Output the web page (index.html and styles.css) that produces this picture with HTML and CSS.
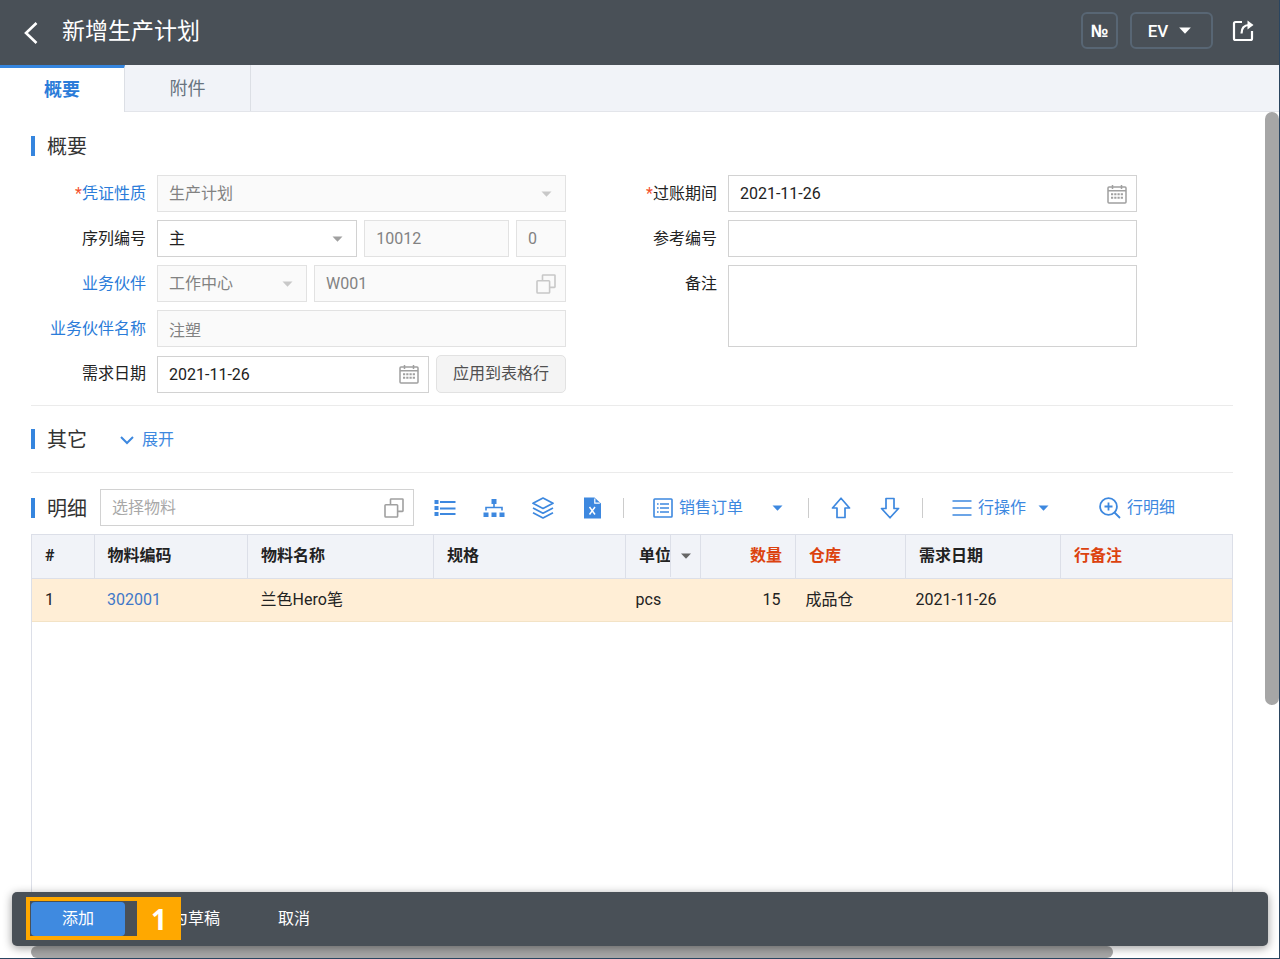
FILE: index.html
```html
<!DOCTYPE html>
<html lang="zh-CN">
<head>
<meta charset="utf-8">
<meta name="viewport" content="width=device-width, initial-scale=1">
<title>新增生产计划</title>
<link rel="stylesheet" href="styles.css">
</head>
<body>
<svg class="defs" width="0" height="0" aria-hidden="true">
  <symbol id="calendar" viewBox="0 0 20 20"><rect x="1" y="3" width="18" height="16" rx="1" fill="none" stroke="currentColor" stroke-width="1.5"/><path d="M1 6.7h18M5.5 1v4M14.5 1v4" fill="none" stroke="currentColor" stroke-width="1.5"/><path d="M4 10.3h12M4 13.8h12" stroke="currentColor" stroke-width="2" stroke-dasharray="2.2 1.05"/></symbol>
  <symbol id="lookup" viewBox="0 0 20 20"><path d="M6.5 6V1.6q0-.6.6-.6h11.3q.6 0 .6.6v11.2q0 .6-.6.6H14" fill="none" stroke="currentColor" stroke-width="1.6"/><rect x="1" y="6.8" width="12.6" height="12.2" rx=".8" fill="none" stroke="currentColor" stroke-width="1.6"/></symbol>
  <symbol id="caret" viewBox="0 0 10 6"><path d="M0 .5h10L5 5.8z" fill="currentColor"/></symbol>
</svg>
<div class="app">
  <header class="topbar">
    <button class="back" aria-label="返回"><svg width="16" height="24" viewBox="0 0 16 24"><path d="M13.500 2 3 12l10.500 10" fill="none" stroke="currentColor" stroke-width="2.600"/></svg></button>
    <h1 class="page-title">新增生产计划</h1>
    <button class="top-btn top-btn-square">№</button>
    <button class="top-btn top-btn-user">EV <svg width="12" height="7"><use href="#caret"/></svg></button>
    <button class="share" aria-label="分享"><svg width="22" height="22" viewBox="0 0 22 22" fill="none" stroke="currentColor" stroke-width="2.200"><path d="M10 2H3.500Q2 2 2 3.500v15Q2 20 3.500 20h15q1.500 0 1.500-1.500V11"/><path d="M9.500 13.500C9.500 8 12 5 17 5"/><path d="M15.500.5 21.500 5l-6 4.500z" fill="currentColor" stroke="none"/></svg></button>
  </header>
  <nav class="tabs">
    <button class="tab tab-active">概要</button>
    <button class="tab">附件</button>
  </nav>
  <div class="body">
    <main class="content">
      <section class="summary">
        <h2 class="section-title">概要</h2>
        <form class="form">
          <div class="form-col">
            <div class="row">
              <label class="label label-link" for="nature"><span class="req">*</span>凭证性质</label>
              <div class="fields"><div class="box grow"><select id="nature" class="control" disabled><option>生产计划</option></select><svg class="caret" width="11" height="6"><use href="#caret"/></svg></div></div>
            </div>
            <div class="row">
              <label class="label" for="series">序列编号</label>
              <div class="fields">
                <div class="box half"><select id="series" class="control"><option>主</option></select><svg class="caret" width="11" height="6"><use href="#caret"/></svg></div>
                <div class="box grow"><input class="control" value="10012" aria-label="编号" disabled></div>
                <div class="box tiny"><input class="control" value="0" aria-label="版本" disabled></div>
              </div>
            </div>
            <div class="row">
              <label class="label label-link" for="partner">业务伙伴</label>
              <div class="fields">
                <div class="box third"><select id="partner" class="control" disabled><option>工作中心</option></select><svg class="caret" width="11" height="6"><use href="#caret"/></svg></div>
                <div class="box grow"><input class="control" value="W001" aria-label="业务伙伴编号" disabled><svg class="field-icon" width="20" height="20"><use href="#lookup"/></svg></div>
              </div>
            </div>
            <div class="row">
              <label class="label label-link" for="pname">业务伙伴名称</label>
              <div class="fields"><div class="box grow"><input id="pname" class="control" value="注塑" disabled></div></div>
            </div>
            <div class="row">
              <label class="label" for="due">需求日期</label>
              <div class="fields">
                <div class="box grow"><input id="due" class="control" value="2021-11-26"><svg class="field-icon" width="20" height="20"><use href="#calendar"/></svg></div>
                <button type="button" class="apply">应用到表格行</button>
              </div>
            </div>
          </div>
          <div class="form-col">
            <div class="row">
              <label class="label" for="period"><span class="req">*</span>过账期间</label>
              <div class="fields"><div class="box grow"><input id="period" class="control" value="2021-11-26"><svg class="field-icon" width="20" height="20"><use href="#calendar"/></svg></div></div>
            </div>
            <div class="row">
              <label class="label" for="ref">参考编号</label>
              <div class="fields"><div class="box grow"><input id="ref" class="control"></div></div>
            </div>
            <div class="row">
              <label class="label" for="memo">备注</label>
              <div class="fields"><textarea id="memo" class="control memo"></textarea></div>
            </div>
          </div>
        </form>
      </section>
      <section class="other">
        <h2 class="section-title">其它</h2>
        <button class="expand"><svg width="14" height="10" viewBox="0 0 14 10"><path d="m1 2 6 6 6-6" fill="none" stroke="currentColor" stroke-width="2"/></svg>展开</button>
      </section>
      <section class="detail">
        <div class="detail-bar">
          <h2 class="section-title">明细</h2>
          <div class="box picker"><input class="control" placeholder="选择物料" aria-label="选择物料"><svg class="field-icon" width="20" height="20"><use href="#lookup"/></svg></div>
          <div class="tools">
            <button class="tool" aria-label="列表"><svg width="22" height="22" viewBox="0 0 22 22" fill="currentColor"><path d="M.500 3h4v4h-4zM.500 9h4v4h-4zM.500 15h4v4h-4zM6 4h15.500v2H6zM6 10.500h15.500v2H6zM6 16h15.500v2H6z"/></svg></button>
            <button class="tool" aria-label="结构"><svg width="22" height="22" viewBox="0 0 22 22" fill="currentColor"><path d="M8.500 2h5v5h-5zM.500 15.500h5v4.500h-5zM8.500 15.500h5v4.500h-5zM16.500 15.500h5v4.500h-5z"/><path d="M11 7v3M3 13.500V10.500h16v3" fill="none" stroke="currentColor" stroke-width="1.600"/></svg></button>
            <button class="tool" aria-label="层级"><svg width="22" height="22" viewBox="0 0 22 22" fill="none" stroke="currentColor" stroke-width="1.700" stroke-linejoin="round"><path d="m11 1 10 5.300-10 5.200L1 6.300z"/><path d="m1 11 10 5.200L21 11M1 15.700 11 21l10-5.300"/></svg></button>
            <button class="tool" aria-label="导入表格"><svg width="22" height="22" viewBox="0 0 22 22"><path d="M3 .5h10.500l6.500 6V21.500H3z" fill="currentColor"/><path d="M13.800 1.500v4.700h5" fill="none" stroke="#fff" stroke-width="1.200"/><path d="m8.500 10 5.500 7.500M14 10l-5.500 7.500" stroke="#fff" stroke-width="1.500"/></svg></button>
          </div>
          <div class="tools tools-order">
            <button class="tool"><svg width="20" height="20" viewBox="0 0 20 20" fill="none" stroke="currentColor" stroke-width="1.600"><rect x="1" y="1" width="18" height="18" rx=".8"/><path d="M7 6h9M7 10h9M7 14h9M4 6h1.600M4 10h1.600M4 14h1.600"/></svg>销售订单</button>
            <button class="tool" aria-label="更多订单"><svg width="11" height="6"><use href="#caret"/></svg></button>
          </div>
          <div class="tools tools-move">
            <button class="tool" aria-label="上移"><svg width="20" height="22" viewBox="0 0 20 22" fill="none" stroke="currentColor" stroke-width="1.700" stroke-linejoin="round"><path d="M10 1.200 18.500 11H14v9.500H6V11H1.500z"/></svg></button>
            <button class="tool" aria-label="下移"><svg width="20" height="22" viewBox="0 0 20 22" fill="none" stroke="currentColor" stroke-width="1.700" stroke-linejoin="round"><path d="M10 20.800 18.500 11.500H14v-10H6v10H1.500z"/></svg></button>
          </div>
          <div class="tools tools-rows">
            <button class="tool tool-menu"><svg width="20" height="20" viewBox="0 0 20 20" stroke="currentColor" stroke-width="1.700"><path d="M.500 3h19M.500 10h19M.500 17h19"/></svg>行操作<svg class="tool-caret" width="11" height="6"><use href="#caret"/></svg></button>
            <button class="tool"><svg width="22" height="22" viewBox="0 0 22 22" fill="none" stroke="currentColor" stroke-width="1.800"><circle cx="9.500" cy="9.500" r="8.400"/><path d="M9.500 5.500v8M5.500 9.500h8M15.500 15.500l5.500 5.500"/></svg>行明细</button>
          </div>
        </div>
        <div class="grid">
          <table class="table">
            <colgroup><col class="c-no"><col class="c-code"><col class="c-name"><col class="c-spec"><col class="c-unit"><col class="c-qty"><col class="c-store"><col class="c-date"><col></colgroup>
            <thead><tr>
              <th>#</th><th>物料编码</th><th>物料名称</th><th>规格</th>
              <th class="unit"><div class="unit-head"><span class="unit-name">单位</span><button class="unit-menu" aria-label="单位菜单"><svg width="10" height="6"><use href="#caret"/></svg></button></div></th>
              <th class="hot num">数量</th><th class="hot">仓库</th><th>需求日期</th><th class="hot">行备注</th>
            </tr></thead>
            <tbody><tr>
              <td>1</td><td><a href="#302001">302001</a></td><td>兰色Hero笔</td><td></td><td class="editable">pcs</td><td class="num">15</td><td class="editable">成品仓</td><td class="editable">2021-11-26</td><td></td>
            </tr></tbody>
          </table>
        </div>
        <div class="hscroll"></div>
      </section>
    </main>
    <div class="vscroll"></div>
  </div>
  <footer class="actions">
    <button class="action action-primary">添加</button>
    <button class="action action-draft">为草稿</button>
    <button class="action">取消</button>
    <div class="callout"><span class="callout-no">1</span></div>
  </footer>
</div>
</body>
</html>
```
FILE: styles.css
```css
* { box-sizing: border-box; }
body {
  margin: 0;
  color: #222;
  font: 16px/20px Roboto, "Noto Sans CJK SC", sans-serif;
}
button, input, select, textarea { font: inherit; color: inherit; margin: 0; }
button { padding: 0; border: 0; background: none; cursor: pointer; }
svg { display: block; flex: none; }
h1, h2 { margin: 0; font-weight: 400; }
.defs { position: absolute; }

.app {
  position: relative;
  display: flex;
  flex-direction: column;
  height: 100vh;
  border-right: 1px solid #2a4560;
  border-bottom: 1px solid #2a4560;
  background: #fff;
  overflow: hidden;
}

.topbar {
  display: flex;
  flex: none;
  align-items: center;
  height: 65px;
  padding: 0 25px 4px 23px;
  background: #495057;
  color: #fff;
}
.back { margin-top: 4px; }
.page-title { flex: 1; margin-left: 23px; padding-top: 2px; font-size: 23px; line-height: 32px; }
.top-btn {
  display: flex;
  align-items: center;
  justify-content: center;
  height: 37px;
  border: 2px solid #586674;
  border-radius: 6px;
  font-size: 17px;
  font-weight: 500;
}
.top-btn-square { width: 37px; font-family: "Open Sans", sans-serif; font-weight: 700; }
.top-btn-user { gap: 11px; width: 83px; margin: 0 19px 0 12px; padding-right: 4px; }

.tabs {
  display: flex;
  flex: none;
  height: 47px;
  border-bottom: 1px solid #e3e5ea;
  background: #f1f3f8;
}
.tab {
  width: 126px;
  padding-top: 2px;
  border-right: 1px solid #dcdfe5;
  color: #68737f;
  font-size: 18px;
}
.tab-active {
  width: 125px;
  height: 47px;
  padding: 0 0 1px;
  border-top: 3px solid #3585de;
  background: #fff;
  color: #2b7cd9;
  font-weight: 700;
}

.body { display: flex; flex: 1; min-height: 0; }
.content {
  display: flex;
  flex: 1;
  flex-direction: column;
  min-width: 0;
  padding: 0 32px 0 31px;
}
.vscroll { width: 14px; height: 593px; max-height: 100%; border-radius: 7px; background: #a6a6a6; }

.section-title {
  flex: none;
  padding: 2px 0 0 12px;
  border-left: 4px solid #3585de;
  font-size: 20px;
  line-height: 18px;
  color: #333;
}
.summary { padding: 24px 0 12px; border-bottom: 1px solid #ebebeb; }
.form {
  display: grid;
  grid-template-columns: 1fr 1fr;
  gap: 36px;
  padding: 19px 8% 0 0;
}
.form-col { display: flex; flex-direction: column; gap: 8px; }
.row { display: flex; gap: 11px; }
.label { flex: none; width: 115px; line-height: 37px; text-align: right; }
.label-link { color: #2b7cd9; }
.req { color: #f4512c; }
.fields { display: flex; flex: 1; gap: 7px; min-width: 0; }
.box { display: grid; align-items: center; min-width: 0; }
.box > * { grid-area: 1 / 1; }
.grow { flex: 1; }
.half { width: 49%; }
.third { width: 150px; }
.tiny { width: 50px; }
.control {
  width: 100%;
  height: 37px;
  padding: 0 11px;
  border: 1px solid #d2d2d2;
  border-radius: 0;
  background: #fff;
  appearance: none;
  outline: 0;
}
.control:disabled { border-color: #e2e2e2; background: #fafafa; color: #828282; opacity: 1; }
.control::placeholder { color: #a8a8a8; }
.memo { height: 82px; resize: none; }
.caret, .field-icon { justify-self: end; color: #a0a0a0; pointer-events: none; }
.caret { margin-right: 14px; }
.field-icon { margin-right: 10px; }
.control:disabled + .caret, .control:disabled + .field-icon { color: #c8c8c8; }
.apply {
  width: 130px;
  height: 38px;
  border: 1px solid #e2e2e2;
  border-radius: 5px;
  background: #f4f4f4;
  color: #505050;
}

.other {
  display: flex;
  align-items: center;
  gap: 33px;
  height: 67px;
  border-bottom: 1px solid #ebebeb;
}
.expand { display: flex; align-items: center; gap: 8px; padding-top: 2px; color: #3d88df; }

.detail { display: flex; flex: 1; flex-direction: column; min-height: 0; }
.detail-bar { display: flex; align-items: center; padding: 16px 0 8px; }
.picker { width: 314px; margin-left: 13px; }
.tools { display: flex; align-items: center; gap: 27px; height: 20px; color: #3d88df; }
.tools:not(:last-child) { border-right: 1px solid #ccc; }
.picker + .tools { padding: 0 20px; }
.tools-order { gap: 29px; padding: 0 25px 0 29px; }
.tools-move { gap: 29px; padding: 0 22px; }
.tools-rows { gap: 50px; padding-left: 29px; }
.tool { display: flex; align-items: center; gap: 6px; white-space: nowrap; }
.tool-caret { margin-left: 6px; }

.grid {
  flex: 1;
  min-height: 0;
  border: 1px solid #dcdfe8;
  border-bottom: 0;
}
.table { width: 100%; border-collapse: collapse; table-layout: fixed; text-align: left; }
.table th {
  height: 43px;
  padding: 0 13px;
  border-right: 1px solid #dcdfe8;
  border-bottom: 1px solid #dcdfe8;
  background: #f1f3f8;
  font-weight: 700;
}
.table th:last-child { border-right: 0; }
.table td { height: 43px; padding: 0 13px; border-bottom: 1px solid #f3e3c6; background: #ffeed6; }
.table .editable { padding: 0 10px; }
.table .num { text-align: right; }
.table td.num { padding-right: 15px; }
.table .hot { color: #dc420f; }
.table a { color: #3f78c8; text-decoration: none; }
.table .unit { padding: 0; }
.unit-head { display: flex; height: 42px; }
.unit-name { flex: 1; padding-left: 13px; line-height: 42px; overflow: hidden; white-space: nowrap; }
.unit-menu { display: flex; align-items: center; justify-content: center; width: 30px; border-left: 1px solid #dcdfe8; color: #666; }
.c-no { width: 62px; }
.c-code { width: 12.8%; }
.c-name { width: 15.5%; }
.c-spec { width: 16%; }
.c-unit { width: 75px; }
.c-qty { width: 95px; }
.c-store { width: 110px; }
.c-date { width: 155px; }
.hscroll { flex: none; width: 90%; height: 12px; border-radius: 6px; background: #a6a6a6; }

.actions {
  position: absolute;
  right: 11px;
  bottom: 12px;
  left: 12px;
  display: flex;
  align-items: center;
  height: 54px;
  padding-left: 19px;
  border-radius: 5px;
  background: #495057;
  box-shadow: 0 2px 10px rgba(0, 0, 0, .4);
  color: #fff;
}
.action { height: 34px; padding: 0 29px; border-radius: 4px; }
.action-primary { width: 94px; background: #3f8ae0; }
.action-draft { padding-left: 47px; }
.callout {
  position: absolute;
  top: 5px;
  left: 14px;
  display: flex;
  justify-content: flex-end;
  width: 155px;
  height: 43px;
  border: 4px solid #ffa800;
  pointer-events: none;
}
.callout-no {
  width: 40px;
  padding-left: 4px;
  background: #ffa800;
  font: 700 28px/36px "Noto Sans", sans-serif;
  text-align: center;
}
```
